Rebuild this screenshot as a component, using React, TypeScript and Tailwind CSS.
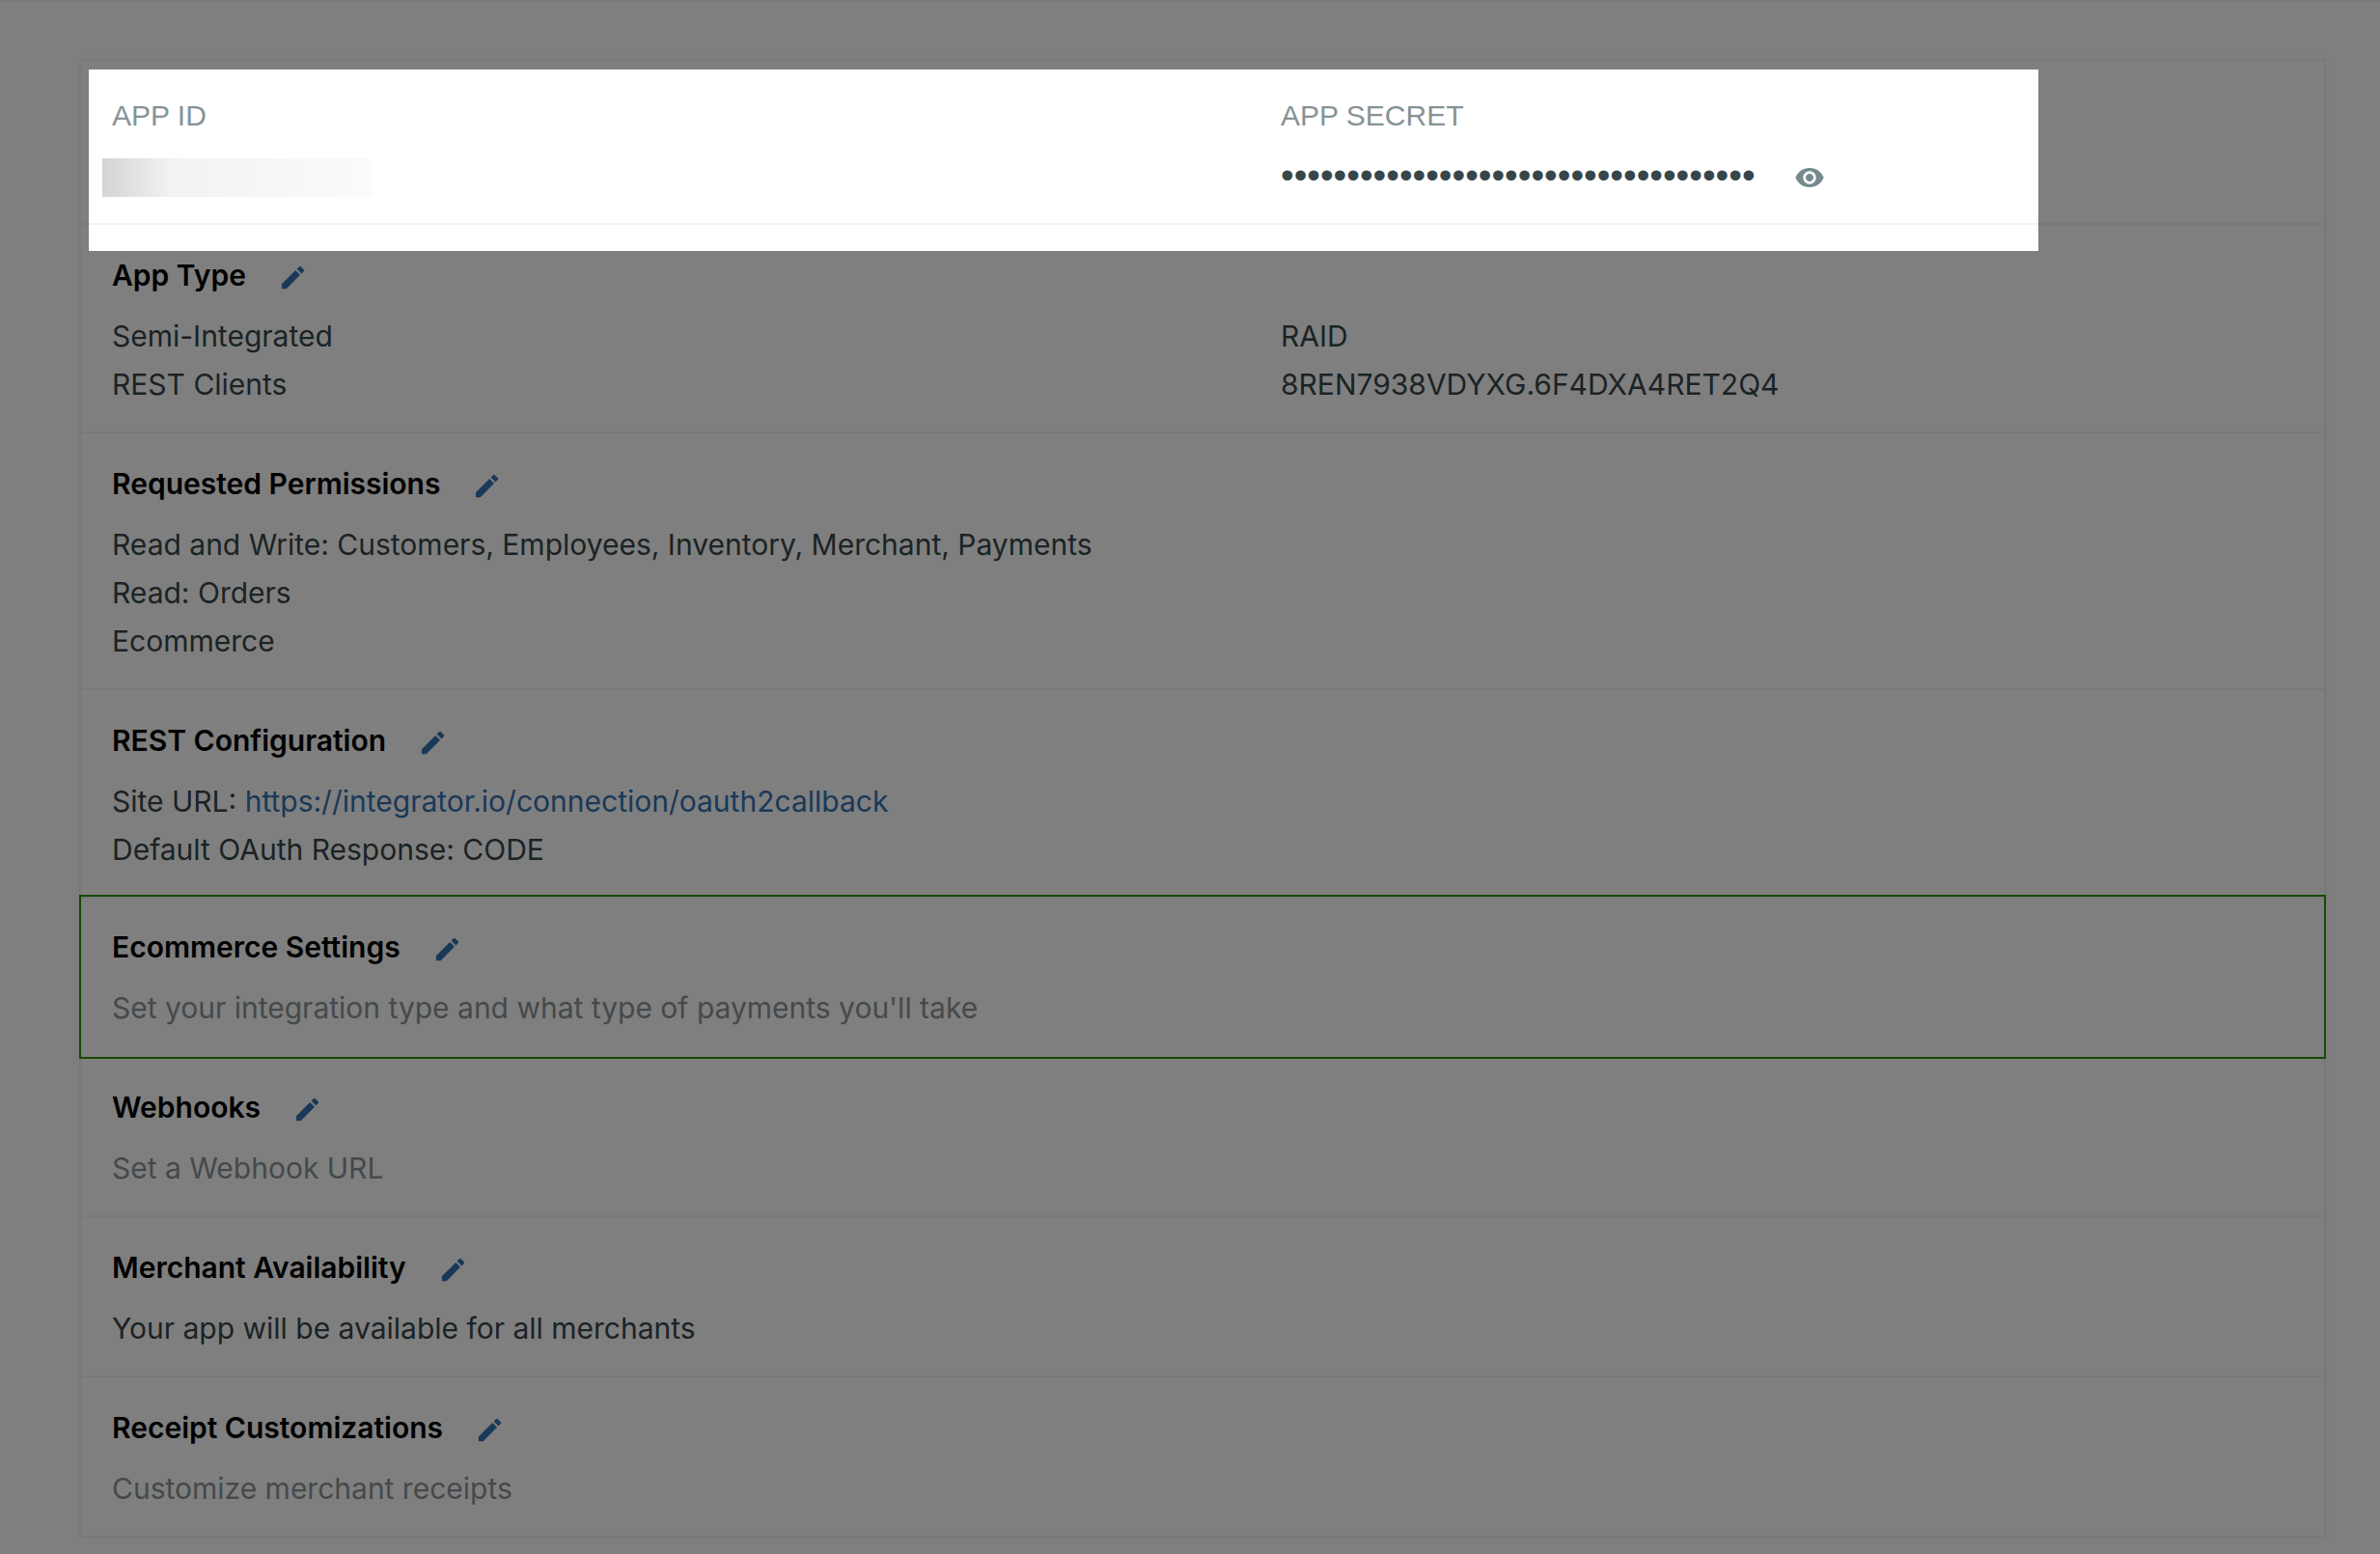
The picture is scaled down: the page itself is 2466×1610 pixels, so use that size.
import React from 'react';
import { MdEdit, MdVisibility } from 'react-icons/md';

type SectionProps = {
  title: string;
  highlighted?: boolean;
  children: React.ReactNode;
};

const Section = ({ title, highlighted = false, children }: SectionProps) => {
  const frame = highlighted
    ? 'relative z-10 -mx-0.5 -mt-1 -mb-0.5 border-2 border-[#2a940a] px-8 pb-[26px]'
    : 'border-b-2 border-[#f3f3f3] px-8 pb-6 last:border-b-0';

  return (
    <section className={`pt-[27px] ${frame}`}>
      <div className="flex items-center gap-[33px] mb-[13px]">
        <h2 className="font-semibold text-black">{title}</h2>
        <button type="button" aria-label={`Edit ${title}`} className="pt-1 text-[#3472b0]">
          <MdEdit className="size-[31px]" />
        </button>
      </div>
      {children}
    </section>
  );
};

const Hint = ({ children }: { children: React.ReactNode }) => (
  <p className="text-[#8a9396]">{children}</p>
);

const App = () => {
  const permissions = [
    'Read and Write: Customers, Employees, Inventory, Merchant, Payments',
    'Read: Orders',
    'Ecommerce'
  ];

  return (
    <div className="min-h-screen overflow-hidden bg-[#fefefe] font-['Inter',sans-serif] text-[30px] leading-[50px] text-[#36464a]">
      <hr className="border-t-2 border-[#f5f5f5]" />
      <main className="mt-[59px] mr-14 mb-[17px] ml-[82px] border-2 border-[#f3f3f3] bg-white shadow-[0_0_12px_rgba(0,0,0,0.03)]">
        {/* Credentials */}
        <section className="relative border-b-2 border-[#f3f3f3] px-8 pt-8 pb-[27px]">
          <div className="grid grid-cols-[1211fr_1049fr]">
            <div>
              <h3 className="mb-[19px] font-['Liberation_Sans',sans-serif] text-[#869396]">APP ID</h3>
              <div className="-ml-2.5 h-10 w-[280px] bg-linear-to-r from-[#d4d4d4] via-[#f1f2f2] via-25% to-[#fbfbfb]" />
            </div>
            <div>
              <label htmlFor="app-secret" className="mb-[19px] block font-['Liberation_Sans',sans-serif] text-[#869396]">
                APP SECRET
              </label>
              <div className="flex h-10 items-center gap-8">
                <input
                  id="app-secret"
                  type="password"
                  readOnly
                  value="000000000000000000000000000000000000"
                  className="h-10 w-[500px] pb-1 font-['Liberation_Sans',sans-serif] text-[39px] leading-9 outline-none"
                />
                <button type="button" aria-label="Show app secret" className="text-[#768a8e]">
                  <MdVisibility className="size-8" />
                </button>
              </div>
            </div>
          </div>

          {/* Spotlight, its shadow dims the rest of the page */}
          <div className="pointer-events-none absolute top-[9px] right-[296px] -bottom-[29px] left-2 z-20 shadow-[0_0_0_9999px_rgba(0,0,0,0.5)]" />
        </section>

        <Section title="App Type">
          <div className="grid grid-cols-[1211fr_1049fr]">
            <div>
              <p>Semi-Integrated</p>
              <p>REST Clients</p>
            </div>
            <div>
              <p>RAID</p>
              <p>8REN7938VDYXG.6F4DXA4RET2Q4</p>
            </div>
          </div>
        </Section>

        <Section title="Requested Permissions">
          {permissions.map((permission) => (
            <p key={permission}>{permission}</p>
          ))}
        </Section>

        <Section title="REST Configuration">
          <p>
            Site URL:{' '}
            <a href="https://integrator.io/connection/oauth2callback" className="text-[#3472b0]">
              https://integrator.io/connection/oauth2callback
            </a>
          </p>
          <p>Default OAuth Response: CODE</p>
        </Section>

        <Section title="Ecommerce Settings" highlighted>
          <Hint>Set your integration type and what type of payments you'll take</Hint>
        </Section>

        <Section title="Webhooks">
          <Hint>Set a Webhook URL</Hint>
        </Section>

        <Section title="Merchant Availability">
          <p>Your app will be available for all merchants</p>
        </Section>

        <Section title="Receipt Customizations">
          <Hint>Customize merchant receipts</Hint>
        </Section>
      </main>
    </div>
  );
};

export default App;
